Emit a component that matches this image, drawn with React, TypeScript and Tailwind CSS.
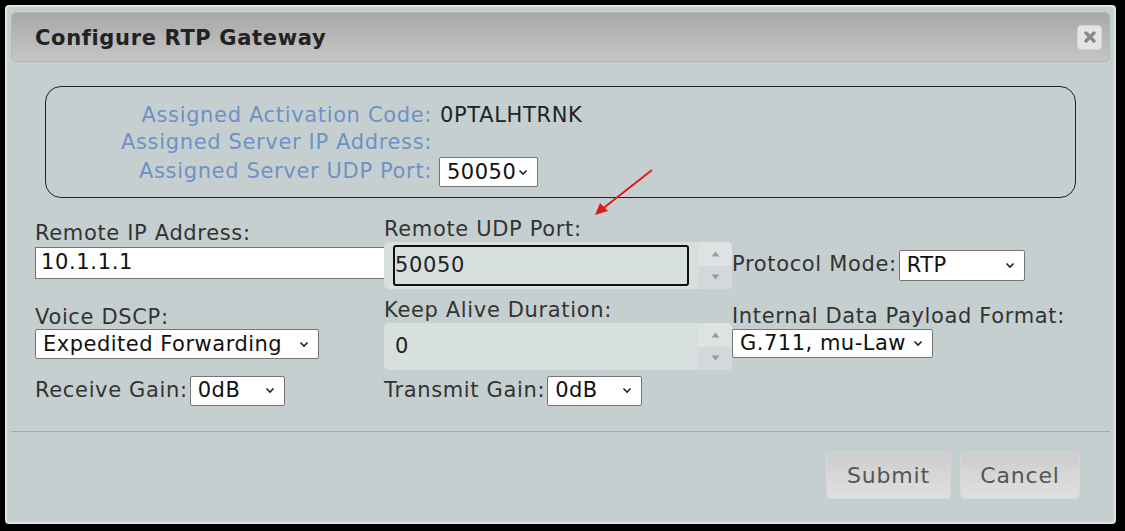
import React from 'react'

const font = { fontFamily: '"DejaVu Sans", Verdana, sans-serif' }

function Chevron() {
  return (
    <svg width="10" height="7" viewBox="0 0 10 7" className="shrink-0">
      <polyline points="1.5,1.5 5,5 8.5,1.5" fill="none" stroke="#222" strokeWidth="1.6" />
    </svg>
  )
}

function Select({ value, className }: { value: string; className: string }) {
  return (
    <div
      className={`flex items-center justify-between bg-white border border-[#767676] rounded-[2px] pl-[7px] pr-[9px] text-[21px] tracking-[0.5px] text-[#111] leading-none ${className}`}
    >
      <span>{value}</span>
      <Chevron />
    </div>
  )
}

function NumberBox({ value, focused }: { value: string; focused?: boolean }) {
  return (
    <div className="flex h-[47px] w-[348px] items-stretch rounded-[5px] bg-[#d8dfdf]">
      <div className="flex flex-1 items-center py-[3px] pl-[9px] pr-[9px]">
        <div
          className={`flex h-full w-full items-center text-[21px] text-[#222] ${
            focused ? 'border-2 border-[#111] rounded-[3px] pl-0' : 'pl-[2px]'
          }`}
        >
          {value}
        </div>
      </div>
      <div className="flex w-[34px] flex-col">
        <div className="flex flex-1 items-center justify-center rounded-tr-[5px] bg-[#dde3e3]">
          <svg width="9" height="6" viewBox="0 0 9 6">
            <polygon points="4.5,0.5 8.5,5.5 0.5,5.5" fill="#9a9a9a" />
          </svg>
        </div>
        <div className="flex flex-1 items-center justify-center bg-[#d3d9da] rounded-br-[5px]">
          <svg width="9" height="6" viewBox="0 0 9 6">
            <polygon points="0.5,0.5 8.5,0.5 4.5,5.5" fill="#9a9a9a" />
          </svg>
        </div>
      </div>
    </div>
  )
}

export default function App() {
  return (
    <div className="relative min-h-[531px] w-[1125px] overflow-hidden bg-black pt-[5px] pl-[5px] tracking-[0.65px]" style={font}>
      <div className="flex h-[519px] w-[1111px] flex-col rounded-[4px] border-2 border-[#dde4e4] bg-[#c6cfd0] px-[4px] pt-[5px]">
        {/* Title bar */}
        <div className="flex h-[50px] items-center justify-between rounded-[5px] border border-[#b3b6b6] bg-gradient-to-b from-[#a8a8a8] to-[#c6c6c6] pl-[23px] pr-[7px]">
          <h1 className="pt-[4px] text-[21px] font-bold text-[#222]">Configure RTP Gateway</h1>
          <div className="flex h-[25px] w-[25px] items-center justify-center rounded-[4px] border border-[#d3d3d3] bg-[#e4e4e4]">
            <svg width="12" height="12" viewBox="0 0 12 12">
              <path d="M2 2 L10 10 M10 2 L2 10" stroke="#8a8a8a" strokeWidth="3.4" strokeLinecap="round" />
            </svg>
          </div>
        </div>

        {/* Body */}
        <div className="px-[24px]">
          <div className="mx-[10px] mt-[24px] h-[112px] rounded-[16px] border border-[#222] pt-[15px]">
            <div className="flex h-[27px] items-center">
              <span className="w-[386px] text-right text-[21px] text-[#6e92c6]">Assigned Activation Code:</span>
              <span className="pl-[8px] text-[21px] text-[#222]">0PTALHTRNK</span>
            </div>
            <div className="flex h-[27px] items-center">
              <span className="w-[386px] text-right text-[21px] text-[#6e92c6]">Assigned Server IP Address:</span>
            </div>
            <div className="flex h-[32px] items-center">
              <span className="w-[386px] text-right text-[21px] text-[#6e92c6]">Assigned Server UDP Port:</span>
              <Select value="50050" className="ml-[7px] h-[30px] w-[99px]" />
            </div>
          </div>

          {/* Row 1 */}
          <div className="mt-[18px] grid grid-cols-[349px_348px_1fr]">
            <div className="pt-[4px]">
              <div className="h-[26px] text-[21px] leading-[26px] text-[#333]">Remote IP Address:</div>
              <div className="mt-[1px] flex h-[32px] w-[351px] items-center border border-[#767676] bg-white pl-[5px] text-[21px] text-[#111]">
                10.1.1.1
              </div>
            </div>
            <div>
              <div className="h-[26px] text-[21px] leading-[26px] text-[#333]">Remote UDP Port:</div>
              <NumberBox value="50050" focused />
            </div>
            <div className="flex items-center pt-[25px]">
              <span className="text-[21px] text-[#333]">Protocol Mode:</span>
              <Select value="RTP" className="ml-[2px] h-[31px] w-[126px]" />
            </div>
          </div>

          {/* Row 2 */}
          <div className="mt-[8px] grid grid-cols-[349px_348px_1fr]">
            <div className="pt-[8px]">
              <div className="h-[24px] text-[21px] leading-[24px] text-[#333]">Voice DSCP:</div>
              <Select value="Expedited Forwarding" className="h-[30px] w-[284px]" />
            </div>
            <div>
              <div className="h-[26px] text-[21px] leading-[26px] text-[#333]">Keep Alive Duration:</div>
              <NumberBox value="0" />
            </div>
            <div className="pt-[6px]">
              <div className="h-[26px] text-[21px] leading-[26px] text-[#333]">Internal Data Payload Format:</div>
              <Select value="G.711, mu-Law" className="h-[29px] w-[201px] pr-[7px]" />
            </div>
          </div>

          {/* Row 3 */}
          <div className="mt-[5px] grid grid-cols-[349px_348px_1fr]">
            <div className="flex items-center">
              <span className="text-[21px] text-[#333]">Receive Gain:</span>
              <Select value="0dB" className="ml-[2px] h-[30px] w-[95px]" />
            </div>
            <div className="flex items-center">
              <span className="text-[21px] text-[#333]">Transmit Gain:</span>
              <Select value="0dB" className="ml-[2px] h-[30px] w-[95px]" />
            </div>
          </div>
        </div>

        <div className="mt-[24px] h-px bg-[#a3abac]" />

        <div className="mt-[20px] flex justify-end gap-[9px] pr-[30px]">
          <button className="h-[47px] w-[125px] rounded-[4px] border border-[#d4d8d8] bg-gradient-to-b from-[#cdcdcd] to-[#e0e0e0] text-[22px] tracking-[0.8px] text-[#555]">
            Submit
          </button>
          <button className="h-[47px] w-[120px] rounded-[4px] border border-[#d4d8d8] bg-gradient-to-b from-[#cdcdcd] to-[#e0e0e0] text-[22px] tracking-[0.8px] text-[#555]">
            Cancel
          </button>
        </div>
      </div>

      {/* Red annotation arrow */}
      <svg className="absolute left-[585px] top-[165px]" width="75" height="58" viewBox="0 0 75 58">
        <line x1="67" y1="5" x2="16" y2="45" stroke="#e01a1a" strokeWidth="2" />
        <polygon points="10,50 15,38 23,46" fill="#e01a1a" />
      </svg>
    </div>
  )
}
